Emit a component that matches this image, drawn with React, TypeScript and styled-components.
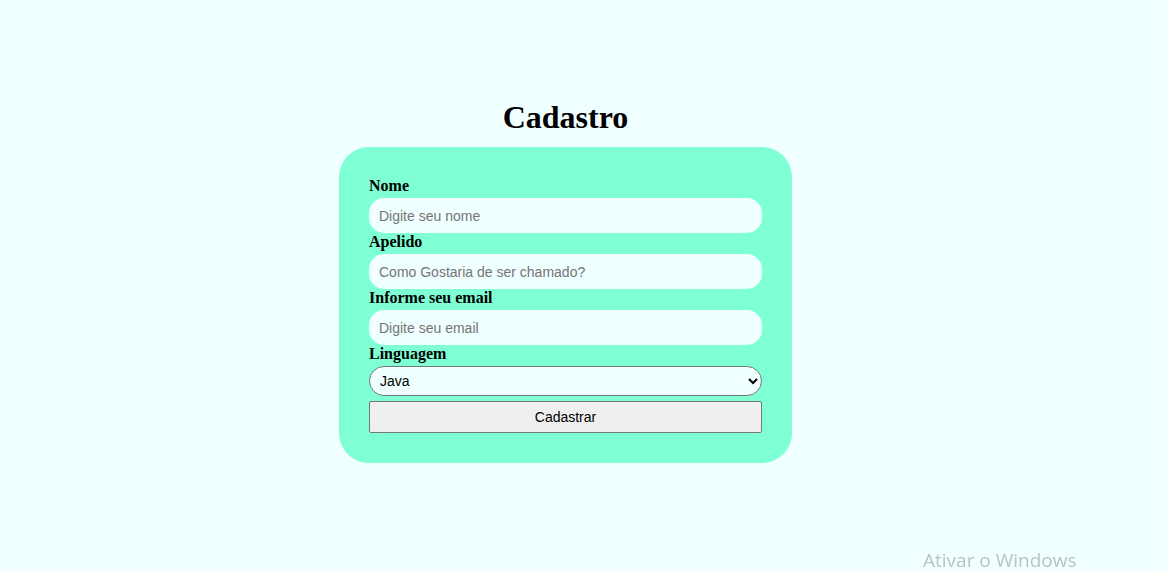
import React, { useState } from 'react';
import styled, { createGlobalStyle } from 'styled-components';

const GlobalStyle = createGlobalStyle`
  html, body {
    margin: 0;
    padding: 0;
    background-color: #f0ffff;
    font-family: 'Liberation Serif', 'Times New Roman', serif;
  }
`;

const Page = styled.div`
  min-height: 571px;
  display: flex;
  flex-direction: column;
  align-items: center;
  padding: 99px 36px 0 0;
  box-sizing: border-box;
`;

const Title = styled.h1`
  margin: 0 0 11px;
  font-size: 32px;
  line-height: 37px;
  font-weight: bold;
  color: #000000;
`;

const Card = styled.form`
  width: 453px;
  box-sizing: border-box;
  background-color: #7fffd4;
  border-radius: 30px;
  padding: 30px;
  display: flex;
  flex-direction: column;
`;

const Label = styled.label`
  font-size: 16px;
  line-height: 18px;
  font-weight: bold;
  margin-bottom: 3px;
`;

const Input = styled.input`
  height: 35px;
  box-sizing: border-box;
  border: none;
  border-radius: 15px;
  background-color: #f0ffff;
  padding: 0 10px;
  font-family: 'Liberation Sans', Arial, sans-serif;
  font-size: 14px;
  outline: none;

  &::placeholder {
    color: #757575;
  }
`;

const Select = styled.select`
  height: 30px;
  box-sizing: border-box;
  border: 1px solid #767676;
  border-radius: 15px;
  background-color: #f0ffff;
  padding: 0 6px;
  font-family: 'Liberation Sans', Arial, sans-serif;
  font-size: 14px;
  color: #000000;
`;

const Button = styled.button`
  margin-top: 5px;
  height: 32px;
  border: 1px solid #767676;
  border-radius: 2px;
  background-color: #efefef;
  font-family: 'Liberation Sans', Arial, sans-serif;
  font-size: 14px;
  color: #000000;
  cursor: pointer;
`;

const Watermark = styled.div`
  position: fixed;
  left: 923px;
  bottom: 0;
  line-height: 22px;
  font-family: 'Open Sans', 'Liberation Sans', sans-serif;
  font-size: 19px;
  color: rgba(120, 120, 120, 0.45);
  pointer-events: none;
`;

const App: React.FC = () => {
  const [lang, setLang] = useState<string>('Java');

  return (
    <>
      <GlobalStyle />
      <Page>
        <Title>Cadastro</Title>
        <Card onSubmit={(e) => e.preventDefault()}>
          <Label htmlFor="nome">Nome</Label>
          <Input id="nome" placeholder="Digite seu nome" />
          <Label htmlFor="apelido">Apelido</Label>
          <Input id="apelido" placeholder="Como Gostaria de ser chamado?" />
          <Label htmlFor="email">Informe seu email</Label>
          <Input id="email" type="email" placeholder="Digite seu email" />
          <Label htmlFor="linguagem">Linguagem</Label>
          <Select id="linguagem" value={lang} onChange={(e) => setLang(e.target.value)}>
            <option>Java</option>
            <option>JavaScript</option>
            <option>Python</option>
            <option>C#</option>
          </Select>
          <Button type="submit">Cadastrar</Button>
        </Card>
      </Page>
      <Watermark>Ativar o Windows</Watermark>
    </>
  );
};

export default App;
